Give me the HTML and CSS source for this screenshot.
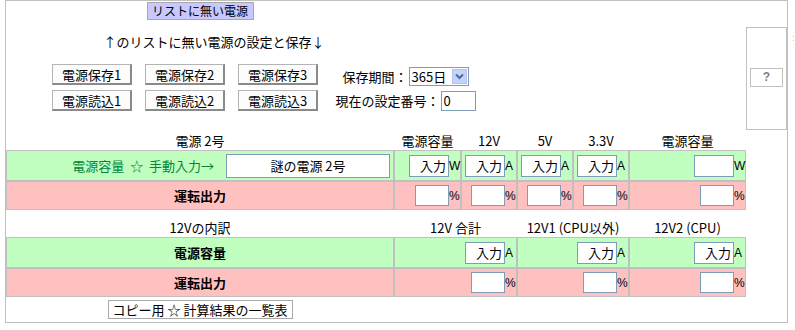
FILE: index.html
```html
<!DOCTYPE html>
<html lang="ja">
<head>
<meta charset="utf-8">
<title>リストに無い電源</title>
<link rel="stylesheet" href="styles.css">
</head>
<body>
<div class="frame">
  <div class="main">
    <div class="top">
      <div class="title-row"><span class="title">リストに無い電源</span></div>
      <div class="lead">↑のリストに無い電源の設定と保存↓</div>
      <div class="controls">
        <button class="btn">電源保存1</button>
        <button class="btn">電源保存2</button>
        <button class="btn">電源保存3</button>
        <div class="field field-period">
          <span class="lbl">保存期間：</span>
          <span class="select"><span class="sel-val">365日</span><span class="sel-arrow"><svg width="13" height="13" viewBox="0 0 13 13"><path d="M3 4.5 L6.5 8 L10 4.5" fill="none" stroke="#4d6a9c" stroke-width="2"/></svg></span></span>
        </div>
        <button class="btn">電源読込1</button>
        <button class="btn">電源読込2</button>
        <button class="btn">電源読込3</button>
        <div class="field">
          <span class="lbl">現在の設定番号：</span>
          <input class="num" type="text" value="0">
        </div>
      </div>
    </div>
    <table class="calc">
      <colgroup>
        <col class="c1"><col class="c2"><col class="c3"><col class="c4"><col class="c5"><col class="c6">
      </colgroup>
      <tr class="head">
        <td>電源 2号</td><td>電源容量</td><td>12V</td><td>5V</td><td>3.3V</td><td>電源容量</td>
      </tr>
      <tr class="green">
        <td class="name"><span class="hint">電源容量 &nbsp;☆ &nbsp;手動入力→</span><input class="psu" type="text" value="謎の電源 2号"></td>
        <td class="r"><input class="in" type="text" value="入力"><span class="u">W</span></td>
        <td class="r"><input class="in" type="text" value="入力"><span class="u">A</span></td>
        <td class="r"><input class="in" type="text" value="入力"><span class="u">A</span></td>
        <td class="r"><input class="in" type="text" value="入力"><span class="u">A</span></td>
        <td class="r"><input class="in" type="text" value=""><span class="u">W</span></td>
      </tr>
      <tr class="pink">
        <td class="lab">運転出力</td>
        <td class="r"><input class="pct" type="text"><span class="u">%</span></td>
        <td class="r"><input class="pct" type="text"><span class="u">%</span></td>
        <td class="r"><input class="pct" type="text"><span class="u">%</span></td>
        <td class="r"><input class="pct" type="text"><span class="u">%</span></td>
        <td class="r"><input class="pct" type="text"><span class="u">%</span></td>
      </tr>
      <tr class="head">
        <td>12Vの内訳</td><td colspan="2">12V 合計</td><td colspan="2">12V1 (CPU以外)</td><td>12V2 (CPU)</td>
      </tr>
      <tr class="green">
        <td class="lab">電源容量</td>
        <td class="r" colspan="2"><input class="in" type="text" value="入力"><span class="u">A</span></td>
        <td class="r" colspan="2"><input class="in" type="text" value="入力"><span class="u">A</span></td>
        <td class="r"><input class="in" type="text" value="入力"><span class="u">A</span></td>
      </tr>
      <tr class="pink">
        <td class="lab">運転出力</td>
        <td class="r" colspan="2"><input class="pct" type="text"><span class="u">%</span></td>
        <td class="r" colspan="2"><input class="pct" type="text"><span class="u">%</span></td>
        <td class="r"><input class="pct" type="text"><span class="u">%</span></td>
      </tr>
      <tr class="foot">
        <td><button class="copy">コピー用 ☆ 計算結果の一覧表</button></td>
        <td colspan="2"></td><td colspan="2"></td><td></td>
      </tr>
    </table>
  </div>
  <div class="panel">
    <button class="help">?</button>
  </div>
</div>
<span class="edge-mark">:</span>
</body>
</html>
```
FILE: styles.css
```css
* { box-sizing: border-box; }
html, body { margin: 0; padding: 0; background: #fff; }
body {
  font-family: "Noto Sans CJK JP", "Noto Sans", sans-serif;
  font-size: 13px;
  color: #000;
  display: flex;
  align-items: flex-start;
  width: 795px;
  height: 330px;
  overflow: hidden;
}
.frame {
  margin-left: 5px;
  width: 783px;
  height: 323px;
  border: 1px solid #c0c0c0;
  display: flex;
  align-items: flex-start;
}
.main { width: 740px; }
.top { height: 122px; }
.title-row { width: 388px; text-align: center; padding-top: 1px; line-height: 0; }
.title {
  display: inline-block;
  width: 107px;
  height: 18px;
  line-height: 16px;
  font-size: 12px;
  background: #c6c8ff;
  border: 1px solid #a8a8a8;
  text-align: center;
}
.lead {
  width: 416px;
  margin-top: 13px;
  line-height: 18px;
  text-align: center;
}
.controls {
  margin-top: 13px;
  margin-left: 46px;
  display: grid;
  grid-template-columns: 80px 80px 80px 150px;
  grid-auto-rows: 21px;
  column-gap: 13px;
  row-gap: 5px;
  align-items: center;
}
.btn {
  width: 80px;
  height: 21px;
  padding: 0;
  font: inherit;
  font-size: 13px;
  line-height: 17px;
  background: #fcfcfc;
  border: 1px solid #b4b4b4;
  border-right: 2px solid #8a8a8a;
  border-bottom: 2px solid #8a8a8a;
  color: #000;
}
.field {
  display: flex;
  justify-content: center;
  align-items: center;
  gap: 1px;
  margin-left: -1px;
}
.field-period { margin-top: 4px; }
.lbl { line-height: 18px; white-space: nowrap; }
.select {
  display: inline-flex;
  align-items: center;
  width: 60px;
  height: 19px;
  border: 1px solid #7f9db9;
  background: #fff;
}
.sel-val { flex: 1; padding-left: 2px; line-height: 17px; }
.sel-arrow {
  width: 15px;
  height: 15px;
  margin-right: 1px;
  background: #c3d3fb;
  border: 1px solid #b3c4ef;
  display: flex;
  align-items: center;
  justify-content: center;
}
.num {
  width: 35px;
  height: 20px;
  border: 1px solid #7f9db9;
  font: inherit;
  font-size: 13px;
  padding: 0 2px;
}
.calc {
  width: 740px;
  table-layout: fixed;
  border-collapse: separate;
  border-spacing: 0;
}
.c1 { width: 388px; }
.c2 { width: 67px; }
.c3, .c4, .c5 { width: 56px; }
.c6 { width: 117px; }
.calc td {
  padding: 0;
  line-height: 16px;
  vertical-align: middle;
  white-space: nowrap;
  text-align: center;
}
tr.head td { border: 1px solid transparent; padding-top: 8px; }
tr.head { height: 27px; }
tr.green { height: 31px; }
tr.pink { height: 29px; }
tr.foot { height: 25px; }
tr.green td { background: #c0ffc0; border: 1px solid #c0c0c0; }
tr.pink td { background: #ffc0c0; border: 1px solid #c0c0c0; }
tr.foot td { border: 1px solid transparent; }
.calc td.r { text-align: right; padding-right: 2px; }
.calc td.name { text-align: right; padding-right: 3px; }
.calc td.lab { font-weight: bold; }
.hint { color: #00863c; vertical-align: middle; }
input { font-family: inherit; color: #000; margin: 0; }
.psu {
  width: 164px;
  height: 24px;
  margin-left: 12px;
  border: 1px solid #7f9db9;
  font-size: 13px;
  text-align: center;
  vertical-align: middle;
}
.in {
  width: 40px;
  height: 22px;
  border: 1px solid #7f9db9;
  font-size: 13px;
  text-align: right;
  padding: 0 2px 0 0;
  vertical-align: middle;
}
.pct {
  width: 34px;
  height: 21px;
  border: 1px solid #7f9db9;
  font-size: 13px;
  padding: 0 2px;
  vertical-align: middle;
}
.u {
  display: inline-block;
  width: 9px;
  text-align: left;
  font-family: "Liberation Sans", sans-serif;
  font-size: 12px;
  letter-spacing: -1px;
  vertical-align: middle;
}
.copy {
  width: 185px;
  height: 19px;
  padding: 0;
  font: inherit;
  font-size: 13px;
  line-height: 17px;
  background: #fff;
  border: 1px solid #a8a8a8;
  color: #000;
}
.panel {
  width: 41px;
  height: 103px;
  margin-top: 26px;
  border: 1px solid #c0c0c0;
  display: flex;
  justify-content: center;
  padding-top: 40px;
}
.help {
  width: 33px;
  height: 19px;
  padding: 0;
  background: #fff;
  border: 1px solid #c0c0c0;
  color: #808080;
  font-family: "Liberation Sans", sans-serif;
  font-weight: bold;
  font-size: 12px;
  line-height: 17px;
}
.edge-mark {
  margin-top: 33px;
  margin-left: 4px;
  color: #c8c8c8;
  font-size: 9px;
  font-family: "Liberation Sans", sans-serif;
}
```
